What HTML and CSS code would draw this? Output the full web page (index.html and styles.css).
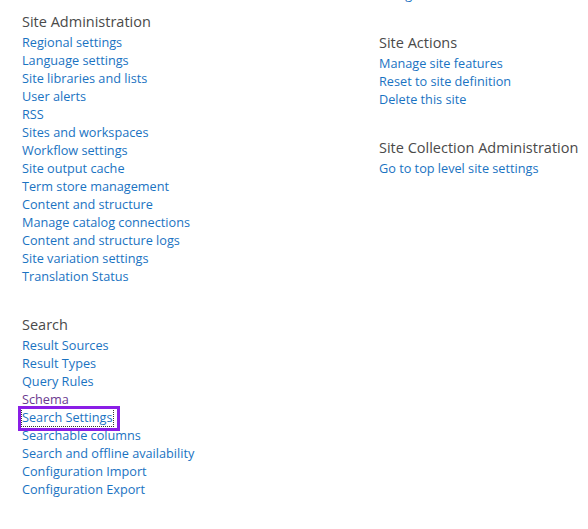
FILE: index.html
```html
<!DOCTYPE html>
<html lang="en">
<head>
<meta charset="utf-8">
<title>Site Settings</title>
<link rel="stylesheet" href="styles.css">
</head>
<body>
<div class="page">
  <div class="col col-left">
    <section class="linksection">
      <h3 class="title">Site Administration</h3>
      <ul class="links">
        <li><a href="#">Regional settings</a></li>
        <li><a href="#">Language settings</a></li>
        <li><a href="#">Site libraries and lists</a></li>
        <li><a href="#">User alerts</a></li>
        <li><a href="#">RSS</a></li>
        <li><a href="#">Sites and workspaces</a></li>
        <li><a href="#">Workflow settings</a></li>
        <li><a href="#">Site output cache</a></li>
        <li><a href="#">Term store management</a></li>
        <li><a href="#">Content and structure</a></li>
        <li><a href="#">Manage catalog connections</a></li>
        <li><a href="#">Content and structure logs</a></li>
        <li><a href="#">Site variation settings</a></li>
        <li><a href="#">Translation Status</a></li>
      </ul>
    </section>
    <section class="linksection">
      <h3 class="title">Search</h3>
      <ul class="links">
        <li><a href="#">Result Sources</a></li>
        <li><a href="#">Result Types</a></li>
        <li><a href="#">Query Rules</a></li>
        <li><a href="#" class="visited">Schema</a></li>
        <li><a href="#" class="focused">Search Settings</a></li>
        <li><a href="#">Searchable columns</a></li>
        <li><a href="#">Search and offline availability</a></li>
        <li><a href="#">Configuration Import</a></li>
        <li><a href="#">Configuration Export</a></li>
      </ul>
    </section>
  </div>
  <div class="col col-right">
    <section class="linksection clipped">
      <ul class="links">
        <li><a href="#">Navigation</a></li>
      </ul>
    </section>
    <section class="linksection">
      <h3 class="title">Site Actions</h3>
      <ul class="links">
        <li><a href="#">Manage site features</a></li>
        <li><a href="#">Reset to site definition</a></li>
        <li><a href="#">Delete this site</a></li>
      </ul>
    </section>
    <section class="linksection">
      <h3 class="title">Site Collection Administration</h3>
      <ul class="links">
        <li><a href="#">Go to top level site settings</a></li>
      </ul>
    </section>
  </div>
</div>
</body>
</html>
```
FILE: styles.css
```css
html, body {
  margin: 0;
  padding: 0;
  background: #ffffff;
}
body {
  font-family: "Open Sans", "Noto Sans", "Liberation Sans", sans-serif;
  font-size: 12.7px;
  color: #444444;
}
.page {
  display: flex;
  padding-left: 22px;
}
.col-left {
  width: 357px;
  padding-top: 12px;
}
.col-right {
  flex: 1;
}
.linksection {
  margin-bottom: 30px;
}
.clipped {
  margin-top: -16px;
}
.title {
  margin: 0;
  font-size: 14.5px;
  font-weight: 400;
  line-height: 20px;
  color: #4a4a4a;
}
.links {
  list-style: none;
  margin: 0;
  padding: 1px 0 0;
}
.links li {
  line-height: 18px;
  height: 18px;
}
.links a {
  color: #1a73c2;
  text-decoration: none;
  white-space: nowrap;
}
.links a.visited {
  color: #6b3a8f;
}
.links a.focused {
  position: relative;
  outline: 1px dotted #333333;
  outline-offset: 0;
}
.links a.focused::after {
  content: "";
  position: absolute;
  left: -4px;
  right: -7px;
  top: -2px;
  bottom: -5px;
  border: 3px solid #8a1ee6;
  pointer-events: none;
}
```
